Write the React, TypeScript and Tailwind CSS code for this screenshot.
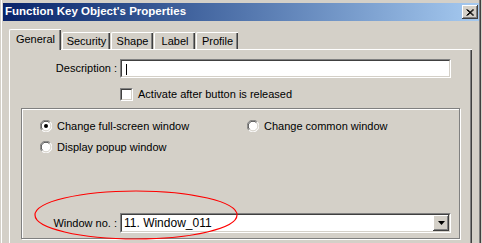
const sunken = "border-t border-l border-t-[#808080] border-l-[#808080] border-b border-r border-b-white border-r-white";

function Radio({ checked = false }: { checked?: boolean }) {
  return (
    <svg width="12" height="12" viewBox="0 0 12 12" className="shrink-0">
      <circle cx="6" cy="6" r="5.5" fill="#ffffff" />
      <path d="M10.2 1.8 A5.5 5.5 0 0 0 1.8 10.2" fill="none" stroke="#808080" strokeWidth="1" />
      <path d="M9.4 2.6 A4.5 4.5 0 0 0 2.6 9.4" fill="none" stroke="#404040" strokeWidth="1" />
      <path d="M1.8 10.2 A5.5 5.5 0 0 0 10.2 1.8" fill="none" stroke="#ffffff" strokeWidth="1" />
      <path d="M2.6 9.4 A4.5 4.5 0 0 0 9.4 2.6" fill="none" stroke="#d4d0c8" strokeWidth="1" />
      {checked && <circle cx="6" cy="6" r="2" fill="#000000" />}
    </svg>
  );
}

function SunkenBox({ className, children }: { className?: string; children?: React.ReactNode }) {
  return (
    <div className={`${sunken} ${className ?? ""}`}>
      <div className="h-full w-full border-t border-l border-t-[#404040] border-l-[#404040] border-b border-r border-b-[#d4d0c8] border-r-[#d4d0c8] bg-white">
        {children}
      </div>
    </div>
  );
}

export default function App() {
  const tabs = [
    { label: "Security", w: "w-[48px]" },
    { label: "Shape", w: "w-[42px]" },
    { label: "Label", w: "w-[41px]" },
    { label: "Profile", w: "w-[42px]" },
  ];

  return (
    <div className="relative h-[243px] w-[482px] overflow-hidden bg-[#d4d0c8] font-['Liberation_Sans',Arial,sans-serif] text-[11px] leading-[13px] text-black">
      <div className="h-full w-[481px] pt-[3px] shadow-[inset_1px_0_0_#d4d0c8,inset_2px_0_0_#ffffff,inset_-1px_0_0_#404040,inset_-2px_0_0_#808080]">
        {/* title bar */}
        <div className="ml-[3px] flex h-[18px] w-[476px] items-center justify-between bg-gradient-to-r from-[#0a246a] to-[#a6caf0]">
          <span className="pl-[2px] text-[11.5px] font-bold leading-none text-white">
            Function Key Object's Properties
          </span>
          <div className="mr-[1px] flex h-[14px] w-[16px] items-center justify-center bg-[#d4d0c8] shadow-[inset_-1px_-1px_0_#404040,inset_1px_1px_0_#ffffff,inset_-2px_-2px_0_#808080]">
            <svg width="8" height="7" viewBox="0 0 8 7">
              <path d="M0.5 0.5 L7 6.5 M1.5 0.5 L8 6.5 M7 0.5 L0.5 6.5 M8 0.5 L1.5 6.5" stroke="#000" strokeWidth="1" />
            </svg>
          </div>
        </div>

        {/* tabs */}
        <div className="mt-[8px] ml-[9px] flex h-[20px] items-end">
          <div className="relative z-10 -mb-[1px] flex h-[21px] w-[52px] items-center justify-center rounded-tl-[2px] border-t border-l border-white bg-[#d4d0c8] pb-[1px] shadow-[inset_-1px_0_0_#404040,inset_-2px_0_0_#808080]">
            General
          </div>
          {tabs.map((t) => (
            <div
              key={t.label}
              className={`${t.w} ml-[1px] flex h-[17px] items-center justify-center rounded-tl-[2px] border-t border-l border-white pt-[1px] shadow-[inset_-1px_0_0_#404040,inset_-2px_0_0_#808080]`}
            >
              {t.label}
            </div>
          ))}
        </div>

        {/* tab panel */}
        <div className="ml-[9px] h-[200px] w-[463px] border-t border-l border-white pt-[9px] shadow-[inset_-1px_0_0_#404040,inset_-2px_0_0_#808080]">
          <div className="flex items-center">
            <span className="w-[107px] text-right">Description :</span>
            <SunkenBox className="ml-[3px] h-[19px] w-[331px]">
              <div className="ml-[4px] mt-[3px] h-[11px] w-[1px] bg-black" />
            </SunkenBox>
          </div>

          <div className="mt-[10px] flex h-[13px] items-center pl-[110px]">
            <SunkenBox className="h-[13px] w-[13px]" />
            <span className="ml-[5px]">Activate after button is released</span>
          </div>

          {/* group box */}
          <div className="ml-[11px] mt-[7px] flex h-[131px] w-[439px] flex-col border border-[#808080] pt-[11px] pb-[5px] shadow-[inset_1px_1px_0_#ffffff,1px_1px_0_#ffffff]">
            <div className="flex h-[12px] items-center pl-[18px]">
              <div className="flex w-[207px] items-center gap-[5px]">
                <Radio checked />
                <span>Change full-screen window</span>
              </div>
              <div className="flex items-center gap-[5px]">
                <Radio />
                <span>Change common window</span>
              </div>
            </div>
            <div className="mt-[9px] flex h-[12px] items-center gap-[5px] pl-[18px]">
              <Radio />
              <span>Display popup window</span>
            </div>

            <div className="mt-auto flex items-center">
              <span className="w-[95px] text-right">Window no. :</span>
              <SunkenBox className="ml-[3px] h-[20px] w-[331px]">
                <div className="flex h-full items-center justify-between">
                  <span className="pl-[2px] text-[12px]">11. Window_011</span>
                  <div className="flex h-[16px] w-[16px] items-center justify-center bg-[#d4d0c8] shadow-[inset_-1px_-1px_0_#404040,inset_1px_1px_0_#ffffff,inset_-2px_-2px_0_#808080]">
                    <svg width="7" height="4" viewBox="0 0 7 4">
                      <path d="M0 0 H7 L3.5 4 Z" fill="#000" />
                    </svg>
                  </div>
                </div>
              </SunkenBox>
            </div>
          </div>
        </div>
      </div>

      {/* red annotation ellipse */}
      <svg className="pointer-events-none absolute left-0 top-0" width="482" height="243">
        <ellipse cx="136" cy="215" rx="101" ry="24" fill="none" stroke="#ff0000" strokeWidth="1.2" />
      </svg>
    </div>
  );
}
